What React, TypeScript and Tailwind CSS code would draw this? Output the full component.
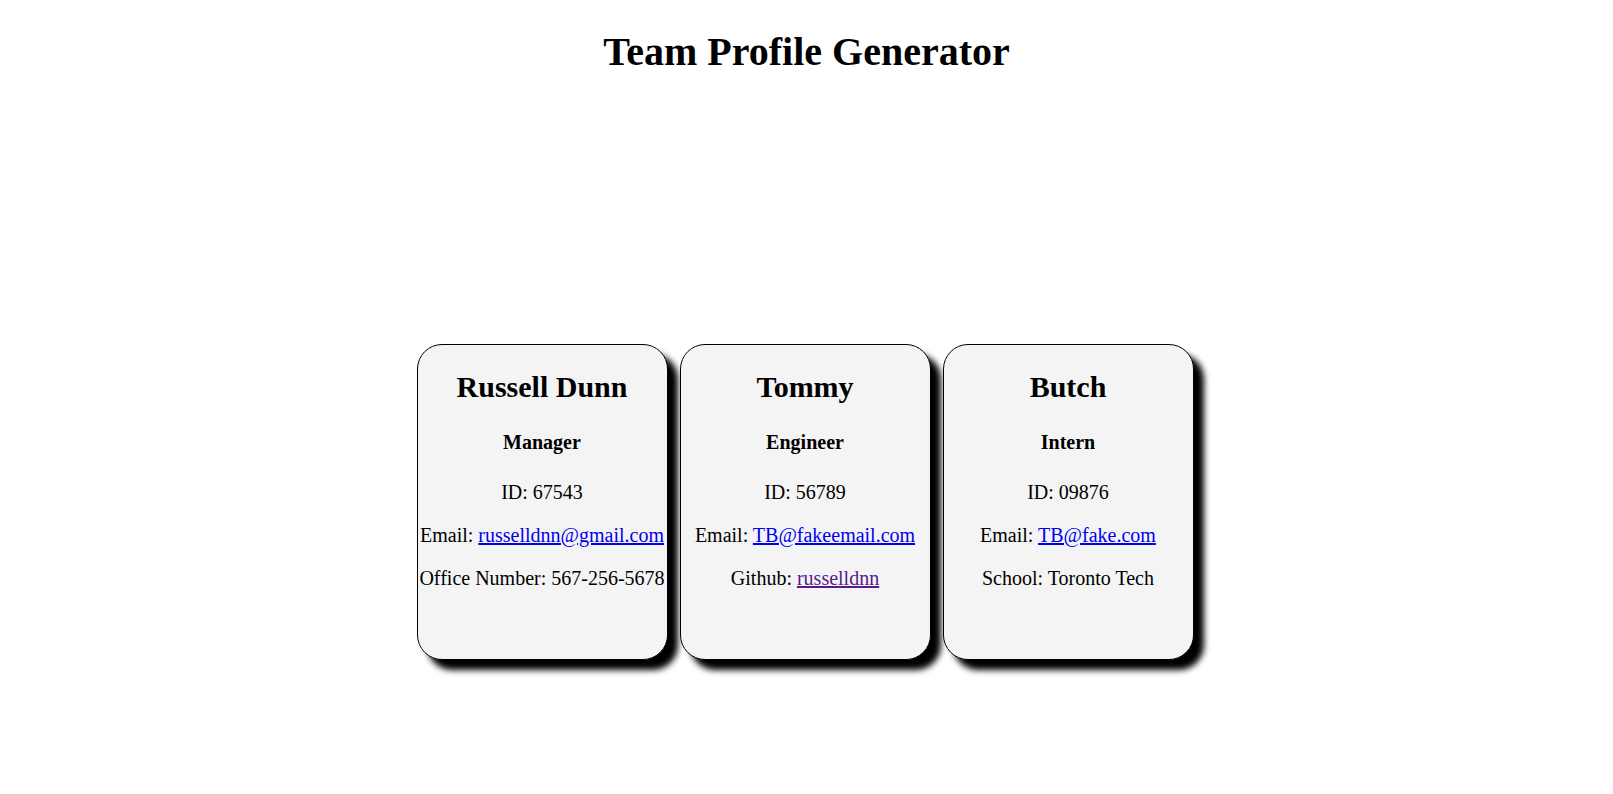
import React from 'react';

type Member = {
  name: string;
  role: string;
  id: string;
  email: string;
  extraLabel: string;
  extra: string;
  extraHref?: string;
};

const team: Member[] = [
  { name: 'Russell Dunn', role: 'Manager', id: '67543', email: 'russelldnn@gmail.com', extraLabel: 'Office Number', extra: '567-256-5678' },
  { name: 'Tommy', role: 'Engineer', id: '56789', email: 'TB@fakeemail.com', extraLabel: 'Github', extra: 'russelldnn', extraHref: '#github' },
  { name: 'Butch', role: 'Intern', id: '09876', email: 'TB@fake.com', extraLabel: 'School', extra: 'Toronto Tech' },
];

const Card: React.FC<{ member: Member }> = ({ member }) => (
  <div className="w-[251px] h-[316px] mx-[6px] bg-[#f4f4f4] border border-black rounded-[25px] shadow-[10px_10px_6px_#000] text-center">
    <h2 className="mt-[25px] mb-[25px] text-[30px] font-bold leading-[34.5px]">{member.name}</h2>
    <h4 className="my-[26.6px] text-[20px] font-bold leading-[23px]">{member.role}</h4>
    <p className="my-[20px] text-[20px] leading-[23px] whitespace-nowrap">ID: {member.id}</p>
    <p className="my-[20px] text-[20px] leading-[23px] whitespace-nowrap">
      Email: <a href={`mailto:${member.email}`} className="text-[#0000ee] underline">{member.email}</a>
    </p>
    <p className="my-[20px] text-[20px] leading-[23px] whitespace-nowrap">
      {member.extraLabel}:{' '}
      {member.extraHref ? (
        <a href={member.extraHref} className="text-[#551a8b] underline">{member.extra}</a>
      ) : (
        member.extra
      )}
    </p>
  </div>
);

export default function App() {
  return (
    <div className="min-h-screen bg-white text-black font-['Liberation_Serif','Times_New_Roman',serif]">
      <h1 className="pt-[29px] text-center text-[40px] font-bold leading-[46px]">Team Profile Generator</h1>
      <div className="mt-[269px] pr-[3px] flex justify-center">
        {team.map((m) => (
          <Card key={m.name} member={m} />
        ))}
      </div>
    </div>
  );
}
